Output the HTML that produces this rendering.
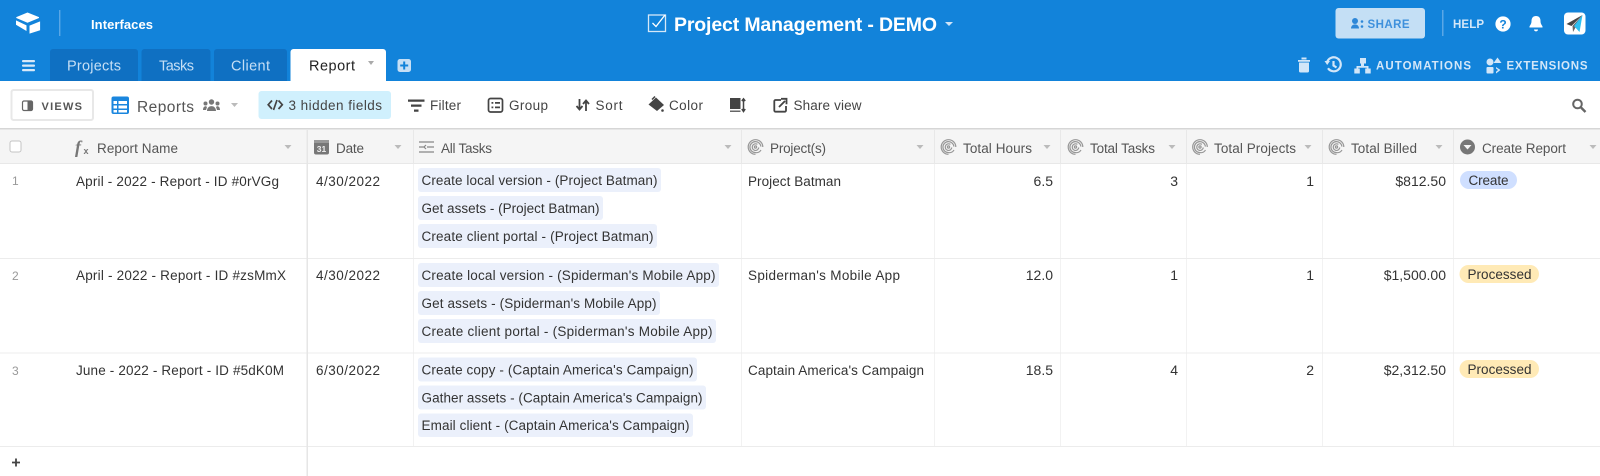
<!DOCTYPE html>
<html><head><meta charset="utf-8"><title>Project Management - DEMO</title>
<style>
html,body{margin:0;padding:0;background:#fff;width:1600px;height:476px;overflow:hidden}
svg{display:block;font-family:"Liberation Sans",Arial,sans-serif;filter:blur(.3px)}
.c{font-size:13.5px;fill:#333}
.n{font-size:14px;fill:#333}
.h{font-size:13.5px;fill:#555}
.t{font-size:13.5px;fill:#444}
.b{font-size:13.5px;fill:#444}
.u{font-size:11.5px;fill:#d4e7f8;font-weight:bold}
.tab{font-size:14.5px;fill:#c6dff5}
</style></head><body>
<svg width="1600" height="476" viewBox="0 0 1600 476" xmlns="http://www.w3.org/2000/svg">
<defs>
<g id="sp" fill="none" stroke="#979797" stroke-width="1.200"><path d="M7.500 14.800a7.300 7.300 0 1 1 7.300-7.300"/><path d="M13 10.500a5.500 5.500 0 0 1-5.500 2.600 5.500 5.500 0 1 1 5.400-6"/><path d="M10.800 8a3.300 3.300 0 1 1-1.400-3.100"/><circle cx="7.500" cy="7.500" r="1.100"/></g>
<path id="ca" d="M-3.500 0h7l-3.500 4z" fill="#bbb"/>
</defs>
<rect width="1600" height="81" fill="#1283da"/>
<!-- logo -->
<g fill="#fff"><path d="M27.500 12.500l11.500 4.600v.9l-11.500 4.800-11.200-4.800v-.9z"/><path d="M29.500 25.600l10.600-4.200v8.800l-10.600 3.400z"/><path d="M16 20.400l10.500 5v5.600l-10.500-6.200z"/></g>
<rect x="59" y="10" width="1.400" height="26" fill="#5aa7e6"/>
<text x="91" y="29" font-size="13" font-weight="bold" fill="#fff" textLength="62">Interfaces</text>
<!-- title -->
<g fill="none" stroke="#d5e8f8" stroke-width="1.300"><rect x="648.500" y="15" width="17" height="16.500"/><path d="M652.500 23l3.500 3.500 9-11.500" stroke="#fff"/></g>
<text x="674" y="31" font-size="19.500" font-weight="bold" fill="#fff" textLength="263">Project Management - DEMO</text>
<path d="M945 22h8l-4 4z" fill="#cfe4f7"/>
<!-- share -->
<rect x="1335.500" y="8" width="89.500" height="30.500" rx="3" fill="#c4dff5"/>
<g fill="#2d87d8"><circle cx="1355" cy="21" r="3"/><path d="M1351 28.500c0-5.500 8-5.500 8 0z"/><circle cx="1362" cy="21.500" r="1.300"/><circle cx="1362" cy="26.500" r="1.300"/></g>
<text x="1367.500" y="28" font-size="11.500" font-weight="bold" fill="#3e90dc" textLength="42">SHARE</text>
<rect x="1442" y="10" width="1.500" height="26" fill="#5aa7e6"/>
<text x="1453" y="28" font-size="11.500" font-weight="bold" fill="#d4e7f8" textLength="31">HELP</text>
<circle cx="1503" cy="24" r="7.600" fill="#fff"/><text x="1503" y="28.500" font-size="12" font-weight="bold" fill="#1283da" text-anchor="middle">?</text>
<path d="M1536 16c3 0 4.500 2 4.500 5 0 3.200 1.500 4 2 5.500v1h-13v-1c.5-1.500 2-2.300 2-5.500 0-3 1.500-5 4.500-5z M1534 29.500h4c0 2.500-4 2.500-4 0z" fill="#fff"/>
<rect x="1564" y="12.500" width="21.500" height="22" rx="4" fill="#fff"/>
<path d="M1582.500 15l-16 9 5 2z" fill="#444"/><path d="M1582.500 15l-10 11 .5 6z" fill="#666"/><path d="M1582.500 15l-8.500 11 5.500 6z" fill="#2cc0f2"/>
<!-- tabs -->
<g fill="#d8e9f8"><rect x="22" y="60" width="13" height="2.200" rx="1"/><rect x="22" y="64.500" width="13" height="2.200" rx="1"/><rect x="22" y="69" width="13" height="2.200" rx="1"/></g>
<path d="M50 81V52a3 3 0 0 1 3-3h82a3 3 0 0 1 3 3v29z M141.500 81V52a3 3 0 0 1 3-3h63a3 3 0 0 1 3 3v29z M214 81V52a3 3 0 0 1 3-3h67a3 3 0 0 1 3 3v29z" fill="#0f70c2"/>
<path d="M290.500 81V52a3 3 0 0 1 3-3h89.500a3 3 0 0 1 3 3v29z" fill="#fff"/>
<text x="67" y="70.500" class="tab" textLength="54">Projects</text>
<text x="159" y="70.500" class="tab" textLength="35">Tasks</text>
<text x="231" y="70.500" class="tab" textLength="39">Client</text>
<text x="309" y="70.500" font-size="14.500" fill="#222" textLength="46">Report</text>
<path d="M368 61h6l-3 4z" fill="#aaa"/>
<rect x="397.500" y="59" width="13.500" height="13" rx="2.500" fill="#c6dff5"/><path d="M404.200 61.500v8M400.200 65.500h8" stroke="#1283da" stroke-width="2"/>
<!-- right tools -->
<g fill="#d2e6f8">
<path d="M1298 60h12v1.800h-12z M1301.500 57.500h5v2h-5z M1299 62.500h10v8.500a1.500 1.500 0 0 1-1.500 1.500h-7a1.500 1.500 0 0 1-1.500-1.500z"/>
<path d="M1360 58h6v5.500h-2v2.500h4.500v2.500h2.200v5h-5.500v-5h1.500v-.8h-8.400v.8h1.500v5h-5.500v-5h2.200v-2.500h4.500v-2.500h-1z"/>
<circle cx="1490" cy="62" r="3.500"/><path d="M1497.500 57.500l4 5.500h-8z"/><rect x="1486.500" y="67" width="7" height="6.500" rx="1"/>
<path d="M1496 67l4.500 3-4.500 3.500v-1.800l2-1.700-2-1.500z" />
</g>
<g fill="none" stroke="#d2e6f8" stroke-width="2.200"><path d="M1327 62.500a7 7 0 1 1 1 5.800"/><path d="M1333.500 61v4.500l3 2"/></g><path d="M1324.500 61h5.500l-2.800 4z" fill="#d2e6f8"/>
<text x="1376" y="69.500" class="u" textLength="95">AUTOMATIONS</text>
<text x="1506.500" y="69.500" class="u" textLength="81">EXTENSIONS</text>
<!-- toolbar -->
<rect x="0" y="128" width="1600" height="1.500" fill="#d6d6d6"/>
<rect x="11.500" y="90" width="81.500" height="30" rx="2" fill="#fff" stroke="#e8e8e8" stroke-width="2"/>
<rect x="22.500" y="101" width="10" height="9.500" rx="1.500" fill="none" stroke="#666" stroke-width="1.200"/><rect x="27.500" y="101" width="5" height="9.500" fill="#666"/>
<text x="41.500" y="110" font-size="11" font-weight="bold" fill="#555" textLength="40.500">VIEWS</text>
<rect x="111.500" y="96.500" width="17.500" height="17.500" rx="2" fill="#1a86de"/>
<path d="M113.500 101h3.500v3h-3.500z M118.500 101h8.500v3h-8.500z M113.500 105.500h3.500v3h-3.500z M118.500 105.500h8.500v3h-8.500z M113.500 110h3.500v2.500h-3.500z M118.500 110h8.500v2.500h-8.500z" fill="#fff"/>
<text x="137" y="112" font-size="15.500" fill="#555" textLength="57">Reports</text>
<g fill="#777"><circle cx="211.500" cy="102" r="2.700"/><circle cx="205.500" cy="103.500" r="2"/><circle cx="217.500" cy="103.500" r="2"/><path d="M207 111c0-6.500 9-6.500 9 0z M203 110c0-4 3-4.500 4-3l-1 3z M220 110c0-4-3-4.500-4-3l1 3z"/></g>
<use href="#ca" x="234.500" y="103"/>
<rect x="258.500" y="91" width="132.500" height="28" rx="3" fill="#d0f0fd"/>
<g fill="none" stroke="#444" stroke-width="1.700"><path d="M272 100.500l-3.800 4.200 3.800 4.300 M278.500 100.500l3.800 4.200-3.800 4.300 M277 100l-3.500 10"/></g>
<text x="288.500" y="110" class="t" textLength="93.500">3 hidden fields</text>
<path d="M408 99.500h16.500v2.200H408z M411 104.500h10.500v2.200H411z M414 109.500h4.500v2.200H414z" fill="#444"/>
<text x="430" y="110" class="b" textLength="31">Filter</text>
<rect x="488.500" y="98.500" width="14" height="13.500" rx="2" fill="none" stroke="#444" stroke-width="1.700"/><path d="M491.500 102h1.800v1.800h-1.800z M495 102h5v1.800h-5z M491.500 106.500h1.800v1.800h-1.800z M495 106.500h5v1.800h-5z" fill="#444"/>
<text x="509" y="110" class="b" textLength="39">Group</text>
<path d="M579.500 99v10M576.500 106l3 3.500 3-3.500M586 111v-10M583 104l3-3.500 3 3.500" fill="none" stroke="#444" stroke-width="1.800"/>
<text x="595.500" y="110" class="b" textLength="27">Sort</text>
<path d="M656 97.500l8 7.500-7 6-8.500-6.500z" fill="#444"/><path d="M652 99.500l3-3" stroke="#444" stroke-width="1.500"/><circle cx="662.500" cy="110.500" r="1.300" fill="#444"/>
<text x="669" y="110" class="b" textLength="34">Color</text>
<rect x="730" y="98" width="10.500" height="11" fill="#444"/><rect x="730" y="110.500" width="10.500" height="1.500" fill="#666"/><path d="M743.500 99v12.500M741.800 101l1.700-2.200 1.700 2.200M741.800 109l1.700 2.500 1.700-2.500" fill="none" stroke="#444" stroke-width="1.500"/>
<path d="M781 100h-5.500a1.200 1.200 0 0 0-1.200 1.200v9.300a1.200 1.200 0 0 0 1.200 1.200h9.300a1.200 1.200 0 0 0 1.200-1.200V106" fill="none" stroke="#444" stroke-width="1.800"/><path d="M779 107l6-6M781 98.800h5.500v5.500" fill="none" stroke="#444" stroke-width="1.800"/>
<text x="793.500" y="110" class="b" textLength="68">Share view</text>
<circle cx="1577.500" cy="104" r="4.300" fill="none" stroke="#666" stroke-width="2"/><path d="M1581 107.500l4.500 4.500" stroke="#666" stroke-width="2.400"/>
<!-- header -->
<rect x="0" y="129.500" width="1600" height="33.500" fill="#f5f5f5"/>
<rect x="0" y="163" width="1600" height="1" fill="#e8e8e8"/>
<g fill="#f2f2f2">
<rect x="413" y="164" width="1" height="282"/><rect x="741" y="164" width="1" height="282"/><rect x="934" y="164" width="1" height="282"/><rect x="1060" y="164" width="1" height="282"/><rect x="1186" y="164" width="1" height="282"/><rect x="1322" y="164" width="1" height="282"/><rect x="1453" y="164" width="1" height="282"/>
</g>
<g fill="#e8e8e8">
<rect x="413" y="130" width="1" height="33"/><rect x="741" y="130" width="1" height="33"/><rect x="934" y="130" width="1" height="33"/><rect x="1060" y="130" width="1" height="33"/><rect x="1186" y="130" width="1" height="33"/><rect x="1322" y="130" width="1" height="33"/><rect x="1453" y="130" width="1" height="33"/>
</g>
<g fill="#ececec"><rect x="0" y="258" width="1600" height="1"/><rect x="0" y="352.500" width="1600" height="1"/><rect x="0" y="446" width="1600" height="1"/></g>
<rect x="306.500" y="129" width="1.500" height="347" fill="#e6e6e6"/>
<rect x="10" y="141" width="11" height="11" rx="2" fill="#fff" stroke="#c4c4c4"/>
<text x="75" y="153" font-family="Liberation Serif" font-style="italic" font-weight="bold" font-size="18" fill="#777">f</text><text x="83.500" y="154" font-size="9" font-weight="bold" fill="#777">x</text>
<text x="97" y="153" class="h" textLength="81">Report Name</text><use href="#ca" x="288" y="145"/>
<rect x="314" y="140" width="15" height="14.500" rx="2" fill="#777"/><rect x="314" y="140" width="15" height="3" fill="#999"/><text x="321.500" y="152" font-size="8.500" font-weight="bold" fill="#eee" text-anchor="middle">31</text>
<text x="336" y="153" class="h" textLength="28">Date</text><use href="#ca" x="398" y="145"/>
<path d="M419 142h15M419 147h6M427 147h7M419 152h15M426 145l-2 2 2 2" fill="none" stroke="#888" stroke-width="1.200"/>
<text x="441" y="153" class="h" textLength="51">All Tasks</text><use href="#ca" x="728" y="145"/>
<use href="#sp" x="748" y="139.500"/><text x="770" y="153" class="h" textLength="56">Project(s)</text><use href="#ca" x="920" y="145"/>
<use href="#sp" x="941" y="139.500"/><text x="963" y="153" class="h" textLength="69">Total Hours</text><use href="#ca" x="1047" y="145"/>
<use href="#sp" x="1068" y="139.500"/><text x="1090" y="153" class="h" textLength="65">Total Tasks</text><use href="#ca" x="1172" y="145"/>
<use href="#sp" x="1192.500" y="139.500"/><text x="1214" y="153" class="h" textLength="82">Total Projects</text><use href="#ca" x="1308" y="145"/>
<use href="#sp" x="1329" y="139.500"/><text x="1351" y="153" class="h" textLength="66">Total Billed</text><use href="#ca" x="1439" y="145"/>
<circle cx="1467.500" cy="147" r="7.500" fill="#777"/><path d="M1463.500 145h8l-4 4.500z" fill="#f5f5f5"/>
<text x="1482" y="153" class="h" textLength="84">Create Report</text><use href="#ca" x="1593" y="145"/>
<!-- rows -->
<g font-size="12" fill="#999"><text x="12" y="185">1</text><text x="12" y="280">2</text><text x="12" y="375">3</text></g>
<text x="76" y="186" class="c" textLength="203">April - 2022 - Report - ID #0rVGg</text>
<text x="76" y="280" class="c" textLength="210">April - 2022 - Report - ID #zsMmX</text>
<text x="76" y="375" class="c" textLength="208">June - 2022 - Report - ID #5dK0M</text>
<text x="316" y="186" class="c" textLength="64">4/30/2022</text>
<text x="316" y="280" class="c" textLength="64">4/30/2022</text>
<text x="316" y="375" class="c" textLength="64">6/30/2022</text>
<g fill="#ebf0fb">
<rect x="418" y="168" width="243" height="24" rx="3"/><rect x="418" y="196" width="185" height="24" rx="3"/><rect x="418" y="224" width="239" height="24" rx="3"/>
<rect x="418" y="263" width="301" height="24" rx="3"/><rect x="418" y="291" width="242" height="24" rx="3"/><rect x="418" y="319" width="298" height="24" rx="3"/>
<rect x="418" y="357.500" width="279" height="24" rx="3"/><rect x="418" y="385.500" width="288" height="24" rx="3"/><rect x="418" y="413.500" width="275" height="23.500" rx="3"/>
</g>
<text x="421.500" y="185" class="c" textLength="236">Create local version - (Project Batman)</text>
<text x="421.500" y="213" class="c" textLength="178">Get assets - (Project Batman)</text>
<text x="421.500" y="241" class="c" textLength="232">Create client portal - (Project Batman)</text>
<text x="421.500" y="280" class="c" textLength="294">Create local version - (Spiderman's Mobile App)</text>
<text x="421.500" y="308" class="c" textLength="235">Get assets - (Spiderman's Mobile App)</text>
<text x="421.500" y="336" class="c" textLength="291">Create client portal - (Spiderman's Mobile App)</text>
<text x="421.500" y="374.500" class="c" textLength="272">Create copy - (Captain America's Campaign)</text>
<text x="421.500" y="402.500" class="c" textLength="281">Gather assets - (Captain America's Campaign)</text>
<text x="421.500" y="430" class="c" textLength="268">Email client - (Captain America's Campaign)</text>
<text x="748" y="186" class="c" textLength="93">Project Batman</text>
<text x="748" y="280" class="c" textLength="152">Spiderman's Mobile App</text>
<text x="748" y="375" class="c" textLength="176">Captain America's Campaign</text>
<g class="n" text-anchor="end">
<text x="1053" y="186">6.5</text><text x="1178" y="186">3</text><text x="1314" y="186">1</text><text x="1446" y="186">$812.50</text>
<text x="1053" y="280">12.0</text><text x="1178" y="280">1</text><text x="1314" y="280">1</text><text x="1446" y="280">$1,500.00</text>
<text x="1053" y="375">18.5</text><text x="1178" y="375">4</text><text x="1314" y="375">2</text><text x="1446" y="375">$2,312.50</text>
</g>
<rect x="1460" y="171" width="57" height="18" rx="9" fill="#cfdfff"/><text x="1468.500" y="185" class="c" textLength="40">Create</text>
<rect x="1459.500" y="265" width="79.500" height="18" rx="9" fill="#ffeab6"/><text x="1467.500" y="279" class="c" textLength="64">Processed</text>
<rect x="1459.500" y="360" width="79.500" height="18" rx="9" fill="#ffeab6"/><text x="1467.500" y="374" class="c" textLength="64">Processed</text>
<path d="M16 458.500v8M12 462.500h8" stroke="#444" stroke-width="1.800"/>
</svg>
</body></html>
